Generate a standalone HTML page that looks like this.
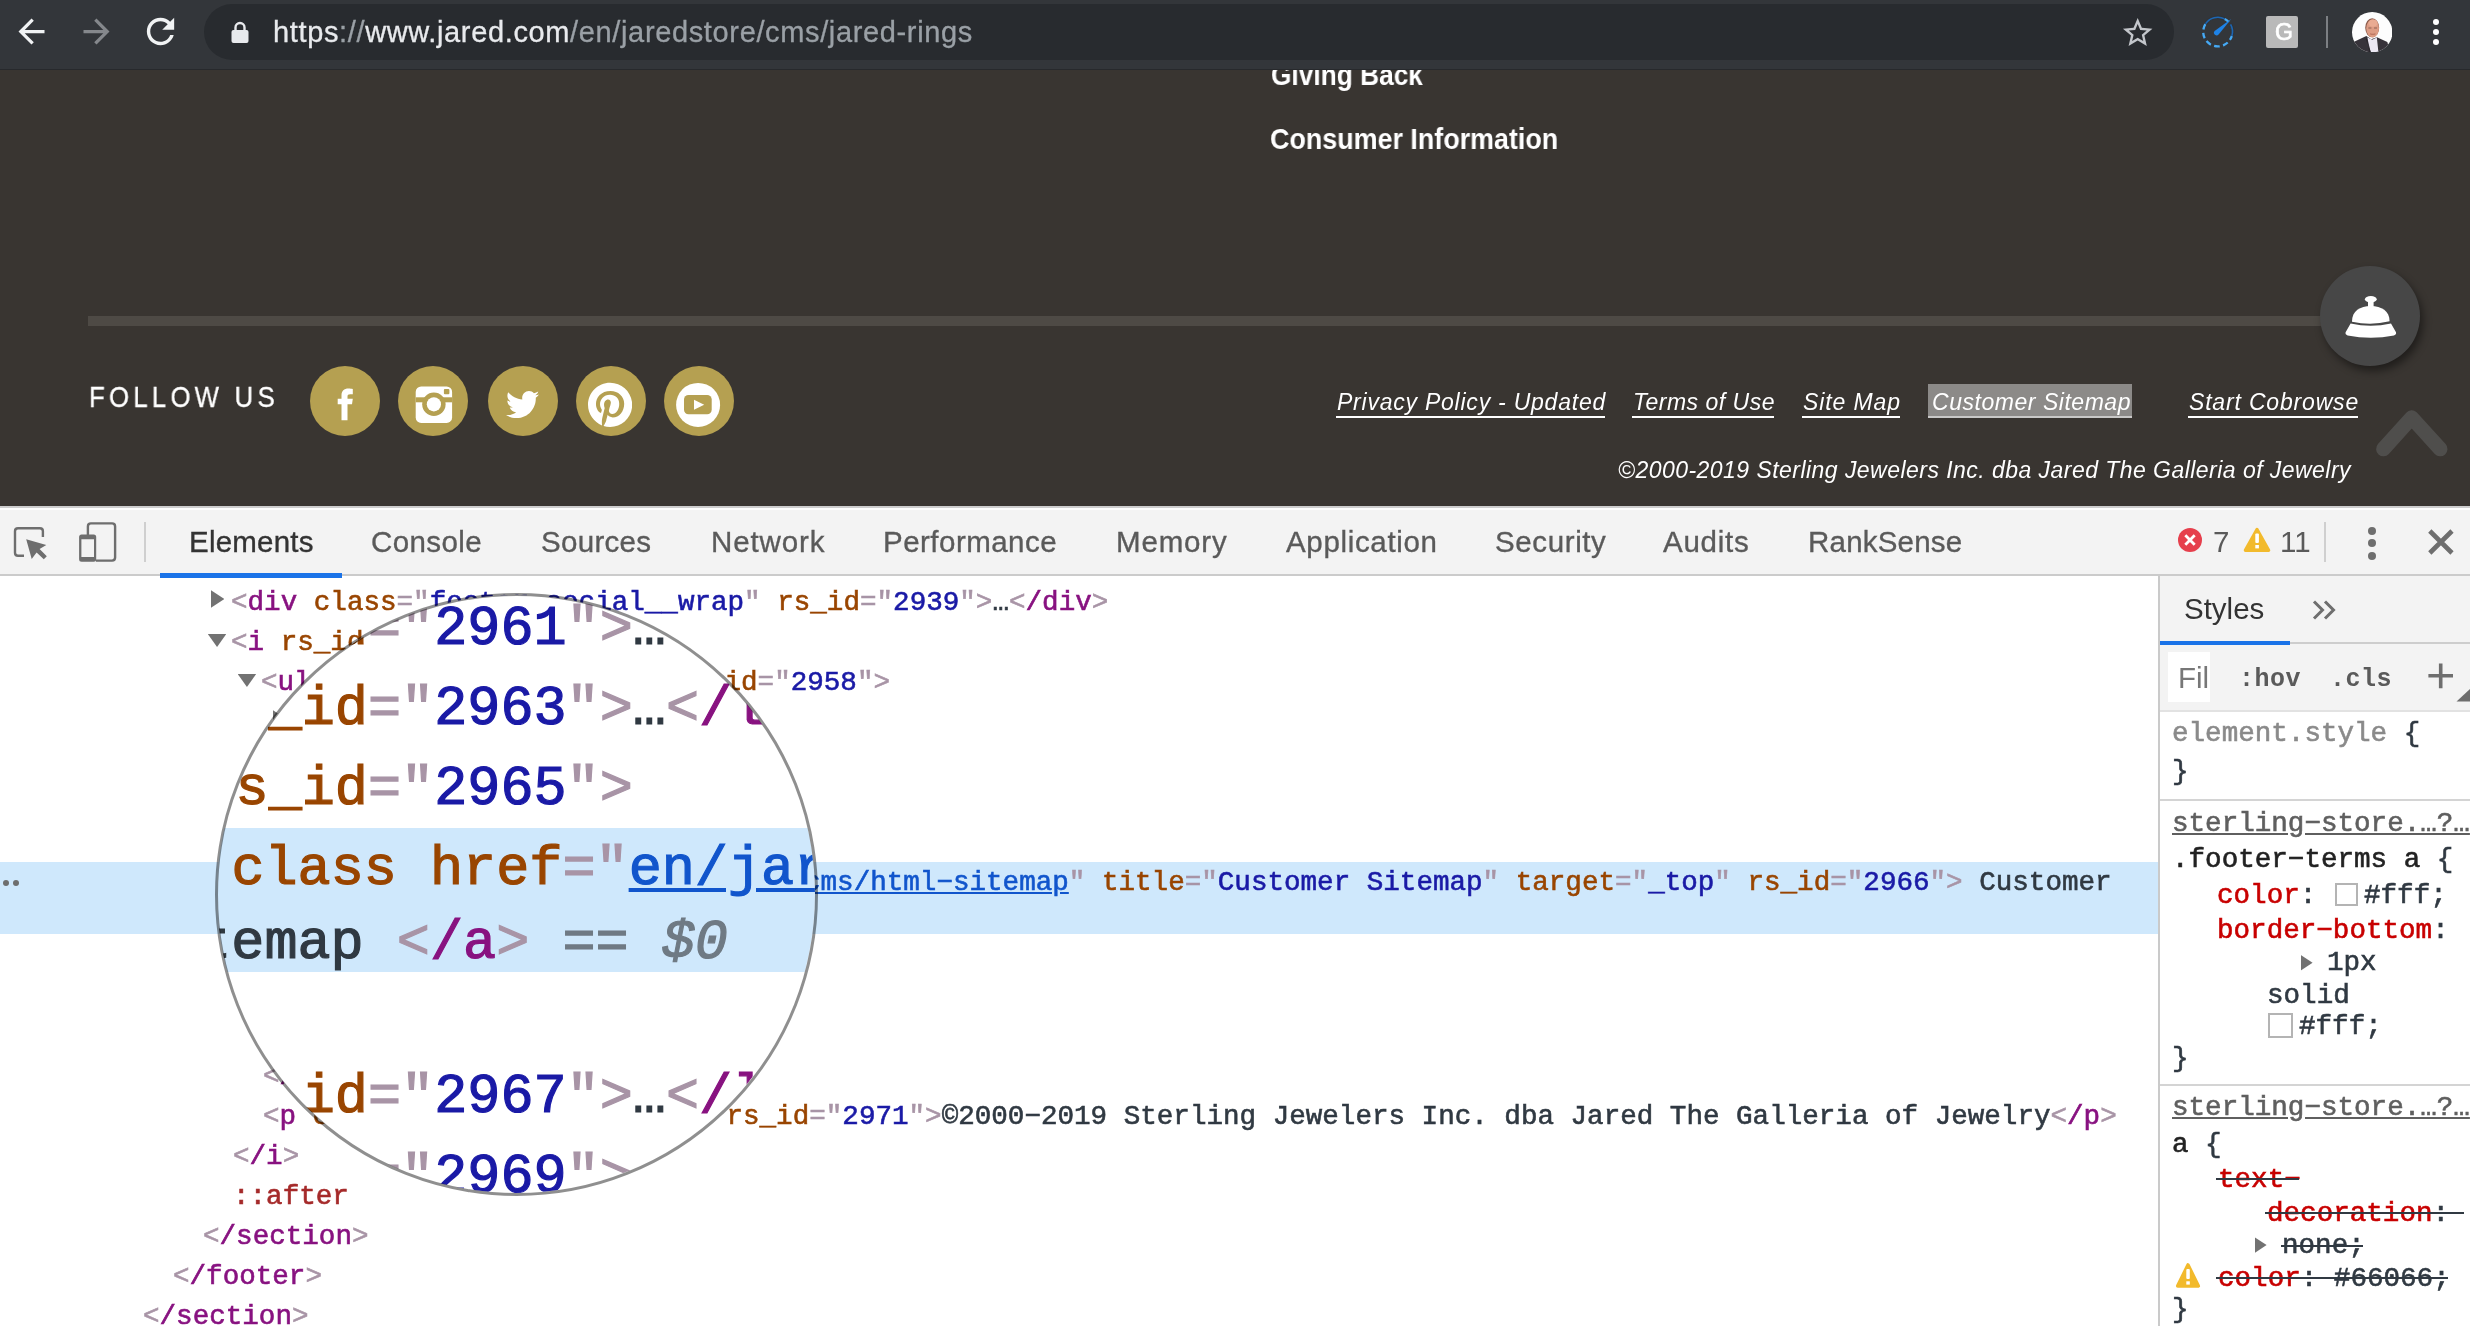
<!DOCTYPE html>
<html><head><meta charset="utf-8"><title>jared</title>
<style>
*{box-sizing:border-box;margin:0;padding:0}
html,body{width:2470px;height:1326px;overflow:hidden;background:#fff}
body{position:relative;font-family:"Liberation Sans",sans-serif}
.abs{position:absolute}
.t,.row,.code{will-change:transform}
.t{position:absolute;white-space:pre;line-height:1}
/* chrome toolbar */
#tb{position:absolute;left:0;top:0;width:2470px;height:69px;background:#33363a}
#tbline{position:absolute;left:0;top:68.5px;width:2470px;height:1.5px;background:#27292c}
#pill{position:absolute;left:204px;top:4px;width:1970px;height:56px;border-radius:28px;background:#282b2f}
#url{left:273px;top:18.2px;font-size:29px;color:#e8eaed;letter-spacing:0.64px;-webkit-text-stroke:0.3px}
#url span{color:#9aa0a6}
/* page */
#page{position:absolute;left:0;top:70px;width:2470px;height:436px;background:#393531;overflow:hidden}
.wt{color:#fff}
.flink{position:absolute;top:315px;height:34px;font-style:italic;font-size:24px;color:#fff;white-space:pre;border-bottom:2px solid #fff;line-height:1}
.flink b{font-weight:normal;display:inline-block;transform-origin:0 0;position:relative;top:9px}
/* devtools */
#dt{position:absolute;left:0;top:506px;width:2470px;height:820px;background:#fff}
#dttb{position:absolute;left:0;top:0;width:2470px;height:70px;background:#f3f3f3;border-top:2px solid #cbcbcb;border-bottom:2px solid #cdcdcd}
.tab{position:absolute;top:16px;font-size:29.5px;color:#5a5a5a;white-space:pre;line-height:34px}
.code{font-family:"Liberation Mono",monospace;font-size:27.58px;white-space:pre;line-height:40px;color:#303942;-webkit-text-stroke:0.6px}
.row{position:absolute;height:40px;white-space:pre}
.tg{color:#a894a6}.tn{color:#881280}.an{color:#994500}.av{color:#1a1aa6}.tx{color:#303942}
.lk{color:#1155cc;text-decoration:underline}
.ps{color:#a52a2a}
.arr{position:absolute;background:#727272}
.arr.r{width:13.4px;height:17.4px;clip-path:polygon(0 0,100% 50%,0 100%)}
.arr.d{width:18.5px;height:13px;clip-path:polygon(0 0,100% 0,50% 100%)}
#ep{position:absolute;left:0;top:577px;width:2158px;height:749px;overflow:hidden;background:#fff}
#mag{position:absolute;left:217px;top:595px;width:598px;height:598px;border-radius:50%;overflow:hidden;background:#fff}
#magin{position:absolute;width:2158px;height:749px;transform-origin:0 0;transform:scale(2);filter:blur(0.3px)}
#magring{position:absolute;left:214.5px;top:592.5px;width:603px;height:603px;border-radius:50%;border:3px solid rgba(0,0,0,.44)}
.pn{color:#c80000}.pv{color:#303942}
.st{text-decoration:line-through;text-decoration-color:#303942}
.sw{display:inline-block;width:22px;height:22px;border:2px solid #b0b0b0;background:#fff;vertical-align:-3px;margin-right:3px}
</style></head>
<body>
<div id="tb"></div><div id="tbline"></div><div id="pill"></div>
<svg class="abs" style="left:11.8px;top:12px;" width="39" height="39" viewBox="0 0 24 24"><path d="M20 11H7.83l5.59-5.59L12 4l-8 8 8 8 1.41-1.41L7.83 13H20v-2z" fill="#f1f3f4"/></svg>
<svg class="abs" style="left:76.5px;top:12px;" width="39" height="39" viewBox="0 0 24 24"><path d="M20 11H7.83l5.59-5.59L12 4l-8 8 8 8 1.41-1.41L7.83 13H20v-2z" fill="#85888c" transform="translate(24,0) scale(-1,1)"/></svg>
<svg class="abs" style="left:140px;top:11px;" width="41" height="41" viewBox="0 0 24 24"><path d="M17.65 6.35C16.2 4.9 14.21 4 12 4c-4.42 0-7.99 3.58-7.99 8s3.57 8 7.99 8c3.73 0 6.84-2.55 7.73-6h-2.08c-.82 2.33-3.04 4-5.65 4-3.31 0-6-2.69-6-6s2.69-6 6-6c1.66 0 3.14.69 4.22 1.78L13 11h7V4l-2.35 2.35z" fill="#f1f3f4"/></svg>
<svg class="abs" style="left:228px;top:18px;" width="24" height="28" viewBox="0 0 24 28"><rect x="3.5" y="12" width="17" height="13" rx="2" fill="#e8eaed"/><path d="M7.5 13 V9.5 a4.5 4.5 0 0 1 9 0 V13" fill="none" stroke="#e8eaed" stroke-width="2.4"/></svg>
<div id="url" class="t">https<span>://</span>www.jared.com<span>/en/jaredstore/cms/jared-rings</span></div>
<svg class="abs" style="left:2120.3px;top:14.7875px;" width="35.4" height="35.4" viewBox="0 0 24 24"><path d="M22 9.24l-7.19-.62L12 2 9.19 8.63 2 9.24l5.46 4.73L5.82 21 12 17.27 18.18 21l-1.63-7.03L22 9.24zM12 15.4l-3.76 2.27 1-4.28-3.32-2.88 4.38-.38L12 6.1l1.71 4.04 4.38.38-3.32 2.88 1 4.28L12 15.4z" fill="#c3c6cb"/></svg>
<svg class="abs" style="left:2198px;top:12px;" width="40" height="40" viewBox="0 0 40 40"><circle cx="19.8" cy="19.8" r="14.6" fill="none" stroke="#45a9f5" stroke-width="2.3" stroke-dasharray="5.6 3.4" transform="rotate(-24 19.8 19.8)"/><path d="M7.6 11.8 A14.6 14.6 0 0 1 26.6 6.9" fill="none" stroke="#2f3337" stroke-width="3.4"/><path d="M7.6 11.8 A14.6 14.6 0 0 1 26.6 6.9" fill="none" stroke="#1d66b3" stroke-width="1.6"/><path d="M32.6 12.4 A14.6 14.6 0 0 1 33.8 24" fill="none" stroke="#2f3337" stroke-width="3.4"/><path d="M32.6 12.4 A14.6 14.6 0 0 1 33.8 24" fill="none" stroke="#1d66b3" stroke-width="1.6"/><path d="M33.2 7 L20.6 22.4 a2.6 2.6 0 0 1 -4 -3.4 Z" fill="#1e82e6"/></svg>
<div class="abs" style="left:2266px;top:16px;width:32px;height:32px;background:#b9b9b9;border-radius:2px"></div>
<div class="t" style="left:2274.6px;top:21.1px;font-size:23px;color:#fff;-webkit-text-stroke:0.7px #fff">G</div>
<div class="abs" style="left:2326px;top:16px;width:2px;height:32px;background:#7c7f83"></div>
<svg class="abs" style="left:2352px;top:12px;" width="40.4" height="40.4" viewBox="0 0 40 40"><defs><clipPath id="avc"><circle cx="20" cy="20" r="20"/></clipPath></defs><circle cx="20" cy="20" r="20" fill="#fdfdfd"/><g clip-path="url(#avc)"><ellipse cx="20" cy="15.6" rx="6.9" ry="9.5" fill="#8a5a4a"/><ellipse cx="20.4" cy="16.2" rx="6.3" ry="9" fill="#dd9c84"/><ellipse cx="20.8" cy="11" rx="4.6" ry="3.6" fill="#e9ab92"/><path d="M16.2 15.8 h3 M21.8 15.8 h3" stroke="#6e4a40" stroke-width="1.1" opacity=".7"/><path d="M18 21.5 q2.6 1.3 5.2 0" stroke="#a8614f" stroke-width="1" fill="none" opacity=".8"/><path d="M1 30 L14.2 23.8 L19 27 L24.7 25 L35 29.8 L38 41 L0 41 Z" fill="#37333a"/><path d="M15 25 L20 27.6 L24.6 25.2 L26.2 40 L18.6 40 Z" fill="#ece8f3"/><path d="M15 25 L13.6 27 L18.8 40 L17 40 Z" fill="#2a272c"/></g></svg>
<div class="abs" style="left:2432.7px;top:18.7px;width:6.6px;height:6.6px;border-radius:50%;background:#fff"></div>
<div class="abs" style="left:2432.7px;top:28.7px;width:6.6px;height:6.6px;border-radius:50%;background:#fff"></div>
<div class="abs" style="left:2432.7px;top:38.7px;width:6.6px;height:6.6px;border-radius:50%;background:#fff"></div>
<div id="page"><div class="t" style="left:1270.5px;top:-9.4px;font-size:28.7px;font-weight:bold;color:#fff;transform:scaleX(.916);transform-origin:0 0">Giving Back</div>
<div class="t" style="left:1270px;top:54.8px;font-size:28.7px;font-weight:bold;color:#fff;transform:scaleX(.937);transform-origin:0 0">Consumer Information</div>
<div class="abs" style="left:88px;top:246px;width:2294px;height:10px;background:#4e4a45"></div>
<div class="t" style="left:89px;top:312.3px;font-size:30px;color:#fff;letter-spacing:4.9px;transform:scaleX(.86);transform-origin:0 0;-webkit-text-stroke:0.3px #fff">FOLLOW US</div>
<div class="abs" style="left:310px;top:295.7px;width:70px;height:70px;border-radius:50%;background:#b5a051"></div>
<div class="abs" style="left:398px;top:295.7px;width:70px;height:70px;border-radius:50%;background:#b5a051"></div>
<div class="abs" style="left:488px;top:295.7px;width:70px;height:70px;border-radius:50%;background:#b5a051"></div>
<div class="abs" style="left:576px;top:295.7px;width:70px;height:70px;border-radius:50%;background:#b5a051"></div>
<div class="abs" style="left:664px;top:295.7px;width:70px;height:70px;border-radius:50%;background:#b5a051"></div>
<svg class="abs" style="left:330px;top:315px" width="30" height="40" viewBox="330 385 30 40"><path d="M341.5 420.2 V404.3 H337.7 V398.8 H341.5 V395.5 C341.5 391 344 388.6 348.5 388.6 C350.3 388.6 351.8 388.8 352.8 389 V394.2 H350.2 C348.2 394.2 347.5 395 347.5 396.6 V398.8 H352.8 L352 404.3 H347.5 V420.2 Z" fill="#fff"/></svg>
<svg class="abs" style="left:410px;top:310px" width="48" height="48" viewBox="410 380 48 48"><rect x="415.7" y="386.4" width="36.4" height="36.5" rx="5.5" fill="#fff"/><rect x="415.7" y="397.3" width="36.4" height="5" fill="#b5a051"/><circle cx="433.9" cy="404.3" r="11.7" fill="#b5a051"/><circle cx="433.9" cy="404.3" r="7.1" fill="#fff"/><rect x="443.9" y="389.1" width="5.5" height="5.1" rx="1" fill="#b5a051"/></svg>
<svg class="abs" style="left:505.5px;top:317.887px" width="33.2" height="33.2" viewBox="0 0 512 512"><path d="M459.37 151.716c.325 4.548.325 9.097.325 13.645 0 138.72-105.583 298.558-298.558 298.558-59.452 0-114.68-17.219-161.137-47.106 8.447.974 16.568 1.299 25.34 1.299 49.055 0 94.213-16.568 130.274-44.832-46.132-.975-84.792-31.188-98.112-72.772 6.498.974 12.995 1.624 19.818 1.624 9.421 0 18.843-1.3 27.614-3.573-48.081-9.747-84.143-51.98-84.143-102.985v-1.299c13.969 7.797 30.214 12.67 47.431 13.319-28.264-18.843-46.781-51.005-46.781-87.391 0-19.492 5.197-37.36 14.294-52.954 51.655 63.675 129.3 105.258 216.365 109.807-1.624-7.797-2.599-15.918-2.599-24.04 0-57.828 46.782-104.934 104.934-104.934 30.213 0 57.502 12.67 76.67 33.137 23.715-4.548 46.456-13.32 66.599-25.34-7.798 24.366-24.366 44.833-46.132 57.827 21.117-2.273 41.584-8.122 60.426-16.243-14.292 20.791-32.161 39.308-52.628 54.253z" fill="#fff"/></svg>
<svg class="abs" style="left:587.9px;top:312.087px" width="44.2" height="45.6258" viewBox="0 0 496 512"><path d="M496 256c0 137-111 248-248 248-25.6 0-50.2-3.9-73.4-11.1 10.1-16.5 25.2-43.5 30.8-65 3-11.6 15.4-59 15.4-59 8.1 15.4 31.7 28.5 56.8 28.5 74.8 0 128.7-68.8 128.7-154.3 0-81.9-66.9-143.2-152.9-143.2-107 0-163.9 71.8-163.9 150.1 0 36.4 19.4 81.7 50.3 96.1 4.7 2.2 7.2 1.2 8.3-3.3.8-3.4 5-20.3 6.9-28.1.6-2.5.3-4.7-1.7-7.1-10.1-12.5-18.3-35.3-18.3-56.6 0-54.7 41.4-107.6 112-107.6 60.9 0 103.6 41.5 103.6 100.9 0 67.1-33.9 113.6-78 113.6-24.3 0-42.6-20.1-36.7-44.8 7-29.5 20.5-61.3 20.5-82.6 0-19-10.2-34.9-31.4-34.9-24.9 0-44.9 25.7-44.9 60.2 0 22 7.4 36.8 7.4 36.8s-24.5 103.8-29 123.2c-5 21.4-3 51.6-.9 71.2C65.4 450.9 0 361.1 0 256 0 119 111 8 248 8s248 111 248 248z" fill="#fff"/></svg>
<svg class="abs" style="left:670px;top:306px" width="56" height="56" viewBox="670 376 56 56"><circle cx="698.1" cy="404.9" r="22" fill="#fff"/><rect x="684" y="395" width="27.7" height="19.3" rx="4.5" fill="#b5a051"/><path d="M694 399.7 L704.2 404.7 L694 409.7 Z" fill="#fff"/></svg>
<div class="abs" style="left:1336px;top:346px;width:269px;height:2px;background:#fff"></div><div class="t" style="left:1337px;top:320.5px;font-size:23px;font-style:italic;color:#fff;letter-spacing:0.769px">Privacy Policy - Updated</div>
<div class="abs" style="left:1632px;top:346px;width:142px;height:2px;background:#fff"></div><div class="t" style="left:1633px;top:320.5px;font-size:23px;font-style:italic;color:#fff;letter-spacing:0.507px">Terms of Use</div>
<div class="abs" style="left:1802px;top:346px;width:98px;height:2px;background:#fff"></div><div class="t" style="left:1803px;top:320.5px;font-size:23px;font-style:italic;color:#fff;letter-spacing:0.904px">Site Map</div>
<div class="abs" style="left:1928px;top:314px;width:204px;height:34px;background:#8c8a88"></div><div class="abs" style="left:1928px;top:346px;width:204px;height:2px;background:#c9c8c7"></div><div class="t" style="left:1932px;top:320.5px;font-size:23px;font-style:italic;color:#fff;letter-spacing:0.533px">Customer Sitemap</div>
<div class="abs" style="left:2188px;top:346px;width:170px;height:2px;background:#fff"></div><div class="t" style="left:2189px;top:320.5px;font-size:23px;font-style:italic;color:#fff;letter-spacing:0.820px">Start Cobrowse</div>
<div class="t" style="left:1618px;top:388.5px;font-size:23px;font-style:italic;color:#fff;letter-spacing:0.460px">©2000-2019 Sterling Jewelers Inc. dba Jared The Galleria of Jewelry</div>
<div class="abs" style="left:2320px;top:196px;width:100px;height:100px;border-radius:50%;background:#474747;box-shadow:3px 5px 9px rgba(0,0,0,.45)"></div>
<svg class="abs" style="left:2340px;top:222px" width="60" height="50" viewBox="2340 292 60 50"><ellipse cx="2370.8" cy="299.2" rx="5.9" ry="3.1" fill="#fff"/><rect x="2368" y="299" width="5.6" height="8" fill="#fff"/><path d="M2352 321.3 C2352 311 2360 306 2370.8 306 C2381.6 306 2389.6 311 2389.6 321.3 Q2370.8 326 2352 321.7 Z" fill="#fff"/><path d="M2350.6 323.6 Q2370.8 328 2391 323.6 L2396 332.3 Q2396.6 334.6 2394 335.4 Q2370.8 340 2347.6 335.4 Q2345 334.6 2345.6 332.3 Z" fill="#fff"/></svg>
<svg class="abs" style="left:2370px;top:330px" width="90" height="60" viewBox="2370 400 90 60"><path d="M2383.4 449 L2411.7 417.6 L2440.2 449" fill="none" stroke="#4f4e4c" stroke-width="14.6" stroke-linecap="round" stroke-linejoin="round"/></svg></div>
<div id="dt"></div>
<div class="abs" style="left:0;top:506px;width:2470px;height:70px;background:#f3f3f3;border-top:2px solid #cdcdcd;border-bottom:2px solid #cbcbcb"></div><div class="abs" style="left:0;top:508px;width:2470px;height:2px;background:#fdfdfd"></div>
<svg class="abs" style="left:10px;top:520px" width="44" height="44" viewBox="10 520 44 44"><path d="M24 555.8 H18 Q15 555.8 15 552.8 V531.2 Q15 528.2 18 528.2 H39.9 Q42.9 528.2 42.9 531.2 V537" fill="none" stroke="#6e6e6e" stroke-width="2.4"/><path d="M26.2 539.2 L46.3 545 L39.6 549 L46.8 556.2 L43.8 559.3 L36.6 552.4 L31.7 558.9 Z" fill="#6e6e6e"/></svg>
<svg class="abs" style="left:74px;top:518px" width="48" height="48" viewBox="74 518 48 48"><path d="M87.9 535 V526.4 Q87.9 523.4 90.9 523.4 H112.1 Q115.1 523.4 115.1 526.4 V557.6 Q115.1 560.6 112.1 560.6 H96" fill="none" stroke="#6e6e6e" stroke-width="2.4"/><path d="M81.6 534.6 H93.7 Q96.2 534.6 96.2 537.1 V559.3 Q96.2 561.8 93.7 561.8 H81.6 Q79.1 561.8 79.1 559.3 V537.1 Q79.1 534.6 81.6 534.6 Z M81.4 539.2 V557 H94 V539.2 Z" fill="#6e6e6e" fill-rule="evenodd"/></svg>
<div class="abs" style="left:144px;top:522px;width:2px;height:40px;background:#cfcfcf"></div>
<div class="t" style="left:188.9px;top:526.7px;font-size:29.5px;color:#333;letter-spacing:0.202px;-webkit-text-stroke:0.35px">Elements</div>
<div class="t" style="left:371.2px;top:526.7px;font-size:29.5px;color:#5a5a5a;letter-spacing:0.410px;-webkit-text-stroke:0.35px">Console</div>
<div class="t" style="left:541.2px;top:526.7px;font-size:29.5px;color:#5a5a5a;letter-spacing:0.296px;-webkit-text-stroke:0.35px">Sources</div>
<div class="t" style="left:710.5px;top:526.7px;font-size:29.5px;color:#5a5a5a;letter-spacing:0.871px;-webkit-text-stroke:0.35px">Network</div>
<div class="t" style="left:883.2px;top:526.7px;font-size:29.5px;color:#5a5a5a;letter-spacing:0.474px;-webkit-text-stroke:0.35px">Performance</div>
<div class="t" style="left:1115.7px;top:526.7px;font-size:29.5px;color:#5a5a5a;letter-spacing:0.842px;-webkit-text-stroke:0.35px">Memory</div>
<div class="t" style="left:1286.2px;top:526.7px;font-size:29.5px;color:#5a5a5a;letter-spacing:0.661px;-webkit-text-stroke:0.35px">Application</div>
<div class="t" style="left:1495.2px;top:526.7px;font-size:29.5px;color:#5a5a5a;letter-spacing:0.615px;-webkit-text-stroke:0.35px">Security</div>
<div class="t" style="left:1663px;top:526.7px;font-size:29.5px;color:#5a5a5a;letter-spacing:0.750px;-webkit-text-stroke:0.35px">Audits</div>
<div class="t" style="left:1807.8px;top:526.7px;font-size:29.5px;color:#5a5a5a;letter-spacing:0.209px;-webkit-text-stroke:0.35px">RankSense</div>
<div class="abs" style="left:160px;top:572.8px;width:182px;height:4.8px;background:#1a73e8;z-index:5"></div>
<svg class="abs" style="left:2176px;top:526px" width="28" height="28" viewBox="2176 526 28 28"><circle cx="2190" cy="540" r="12" fill="#e63f4c"/><path d="M2185.3 535.3 L2194.7 544.7 M2194.7 535.3 L2185.3 544.7" stroke="#fff" stroke-width="2.8"/></svg>
<div class="t" style="left:2213px;top:526.9px;font-size:29.5px;color:#5a5a5a">7</div>
<svg class="abs" style="left:2240px;top:524px" width="34" height="32" viewBox="2240 524 34 32"><path d="M2257 529.5 L2268.6 550.3 H2245.4 Z" fill="#f2ba2c" stroke="#f2ba2c" stroke-width="3.4" stroke-linejoin="round"/><rect x="2255.3" y="533.5" width="3.6" height="9.5" rx="1" fill="#fff"/><rect x="2255.3" y="545" width="3.6" height="3.4" fill="#fff"/></svg>
<div class="t" style="left:2280px;top:526.9px;font-size:29.5px;color:#5a5a5a">11</div>
<div class="abs" style="left:2324px;top:522px;width:2px;height:40px;background:#cfcfcf"></div>
<div class="abs" style="left:2368px;top:526.7px;width:8px;height:8px;border-radius:50%;background:#6e6e6e"></div>
<div class="abs" style="left:2368px;top:539.3px;width:8px;height:8px;border-radius:50%;background:#6e6e6e"></div>
<div class="abs" style="left:2368px;top:551.9px;width:8px;height:8px;border-radius:50%;background:#6e6e6e"></div>
<svg class="abs" style="left:2424px;top:526px" width="34" height="32" viewBox="2424 526 34 32"><path d="M2429.8 531 L2452 553 M2452 531 L2429.8 553" stroke="#6e6e6e" stroke-width="4.6"/></svg>
<div id="ep"><div class="abs" style="left:0;top:285px;width:2158px;height:72px;background:#cfe8fc"></div>
<div class="abs" style="left:3px;top:303px;width:6px;height:6px;border-radius:50%;background:#6e6e6e"></div><div class="abs" style="left:13px;top:303px;width:6px;height:6px;border-radius:50%;background:#6e6e6e"></div>
<div class="row code" style="left:230.6px;top:6px"><span class="tg">&lt;</span><span class="tn">div</span> <span class="an">class</span><span class="tg">=&quot;</span><span class="av">footer−social__wrap</span><span class="tg">&quot;</span> <span class="an">rs_id</span><span class="tg">=&quot;</span><span class="av">2939</span><span class="tg">&quot;</span><span class="tg">&gt;</span><span class="tx">…</span><span class="tg">&lt;</span><span class="tn">/div</span><span class="tg">&gt;</span></div>
<div class="arr r" style="left:211px;top:13.3px"></div>
<div class="row code" style="left:230.6px;top:46px"><span class="tg">&lt;</span><span class="tn">i</span> <span class="an">rs_id</span><span class="tg">=&quot;</span><span class="av">2957</span><span class="tg">&quot;</span><span class="tg">&gt;</span></div>
<div class="arr d" style="left:207.8px;top:57px"></div>
<div class="row code" style="left:260.7px;top:86px"><span class="tg">&lt;</span><span class="tn">ul</span> <span class="an">class</span><span class="tg">=&quot;</span><span class="av">footer−terms</span><span class="tg">&quot;</span> <span class="an">rs_id</span><span class="tg">=&quot;</span><span class="av">2958</span><span class="tg">&quot;</span><span class="tg">&gt;</span></div>
<div class="arr d" style="left:237.7px;top:97px"></div>
<div class="row code" style="left:292.5px;top:126px"><span class="tg">&lt;</span><span class="tn">li</span> <span class="an">rs_id</span><span class="tg">=&quot;</span><span class="av">2959</span><span class="tg">&quot;</span><span class="tg">&gt;</span><span class="tx">…</span><span class="tg">&lt;</span><span class="tn">/li</span><span class="tg">&gt;</span></div>
<div class="arr r" style="left:273px;top:133.3px"></div>
<div class="row code" style="left:292.5px;top:166px"><span class="tg">&lt;</span><span class="tn">li</span> <span class="an">rs_id</span><span class="tg">=&quot;</span><span class="av">2961</span><span class="tg">&quot;</span><span class="tg">&gt;</span><span class="tx">…</span><span class="tg">&lt;</span><span class="tn">/li</span><span class="tg">&gt;</span></div>
<div class="arr r" style="left:273px;top:173.3px"></div>
<div class="row code" style="left:292.5px;top:206px"><span class="tg">&lt;</span><span class="tn">li</span> <span class="an">rs_id</span><span class="tg">=&quot;</span><span class="av">2963</span><span class="tg">&quot;</span><span class="tg">&gt;</span><span class="tx">…</span><span class="tg">&lt;</span><span class="tn">/li</span><span class="tg">&gt;</span></div>
<div class="arr r" style="left:273px;top:213.3px"></div>
<div class="row code" style="left:292.5px;top:246px"><span class="tg">&lt;</span><span class="tn">li</span> <span class="an">rs_id</span><span class="tg">=&quot;</span><span class="av">2965</span><span class="tg">&quot;</span><span class="tg">&gt;</span></div>
<div class="arr d" style="left:268px;top:257px"></div>
<div class="row code" style="left:323.5px;top:286px"><span class="tg">&lt;</span><span class="tn">a</span> <span class="an">class</span> <span class="an">href</span><span class="tg">=&quot;</span><span class="lk">en/jaredstore/cms/html−sitemap</span><span class="tg">&quot;</span> <span class="an">title</span><span class="tg">=&quot;</span><span class="av">Customer Sitemap</span><span class="tg">&quot;</span> <span class="an">target</span><span class="tg">=&quot;</span><span class="av">_top</span><span class="tg">&quot;</span> <span class="an">rs_id</span><span class="tg">=&quot;</span><span class="av">2966</span><span class="tg">&quot;</span><span class="tg">&gt;</span><span class="tx"> Customer</span></div>
<div class="row code" style="left:323.5px;top:323px"><span class="tx">Sitemap </span><span class="tg">&lt;</span><span class="tn">/a</span><span class="tg">&gt;</span><span style="color:#6f7a84"> == <i>$0</i></span></div>
<div class="row code" style="left:292.5px;top:360px"><span class="tg">&lt;</span><span class="tn">/li</span><span class="tg">&gt;</span></div>
<div class="row code" style="left:292.5px;top:400px"><span class="tg">&lt;</span><span class="tn">li</span> <span class="an">rs_id</span><span class="tg">=&quot;</span><span class="av">2967</span><span class="tg">&quot;</span><span class="tg">&gt;</span><span class="tx">…</span><span class="tg">&lt;</span><span class="tn">/li</span><span class="tg">&gt;</span></div>
<div class="arr r" style="left:273px;top:407.3px"></div>
<div class="row code" style="left:292.5px;top:440px"><span class="tg">&lt;</span><span class="tn">li</span> <span class="an">rs_id</span><span class="tg">=&quot;</span><span class="av">2969</span><span class="tg">&quot;</span><span class="tg">&gt;</span><span class="tx">…</span><span class="tg">&lt;</span><span class="tn">/li</span><span class="tg">&gt;</span></div>
<div class="arr r" style="left:273px;top:447.3px"></div>
<div class="row code" style="left:262.5px;top:480px"><span class="tg">&lt;</span><span class="tn">/ul</span><span class="tg">&gt;</span></div>
<div class="row code" style="left:262.5px;top:520px"><span class="tg">&lt;</span><span class="tn">p</span> <span class="an">class</span><span class="tg">=&quot;</span><span class="av">footer−copyright</span><span class="tg">&quot;</span> <span class="an">rs_id</span><span class="tg">=&quot;</span><span class="av">2971</span><span class="tg">&quot;</span><span class="tg">&gt;</span><span class="tx">©2000−2019 Sterling Jewelers Inc. dba Jared The Galleria of Jewelry</span><span class="tg">&lt;</span><span class="tn">/p</span><span class="tg">&gt;</span></div>
<div class="row code" style="left:232.5px;top:560px"><span class="tg">&lt;</span><span class="tn">/i</span><span class="tg">&gt;</span></div>
<div class="row code" style="left:232.5px;top:600px"><span class="ps">::after</span></div>
<div class="row code" style="left:202.5px;top:640px"><span class="tg">&lt;</span><span class="tn">/section</span><span class="tg">&gt;</span></div>
<div class="row code" style="left:172.5px;top:680px"><span class="tg">&lt;</span><span class="tn">/footer</span><span class="tg">&gt;</span></div>
<div class="row code" style="left:142.5px;top:720px"><span class="tg">&lt;</span><span class="tn">/section</span><span class="tg">&gt;</span></div></div>
<div id="mag"><div id="magin" style="left:-733px;top:-337.5px"><div class="abs" style="left:0;top:285px;width:2158px;height:72px;background:#cfe8fc"></div>
<div class="abs" style="left:3px;top:303px;width:6px;height:6px;border-radius:50%;background:#6e6e6e"></div><div class="abs" style="left:13px;top:303px;width:6px;height:6px;border-radius:50%;background:#6e6e6e"></div>
<div class="row code" style="left:230.6px;top:6px"><span class="tg">&lt;</span><span class="tn">div</span> <span class="an">class</span><span class="tg">=&quot;</span><span class="av">footer−social__wrap</span><span class="tg">&quot;</span> <span class="an">rs_id</span><span class="tg">=&quot;</span><span class="av">2939</span><span class="tg">&quot;</span><span class="tg">&gt;</span><span class="tx">…</span><span class="tg">&lt;</span><span class="tn">/div</span><span class="tg">&gt;</span></div>
<div class="arr r" style="left:211px;top:13.3px"></div>
<div class="row code" style="left:230.6px;top:46px"><span class="tg">&lt;</span><span class="tn">i</span> <span class="an">rs_id</span><span class="tg">=&quot;</span><span class="av">2957</span><span class="tg">&quot;</span><span class="tg">&gt;</span></div>
<div class="arr d" style="left:207.8px;top:57px"></div>
<div class="row code" style="left:260.7px;top:86px"><span class="tg">&lt;</span><span class="tn">ul</span> <span class="an">class</span><span class="tg">=&quot;</span><span class="av">footer−terms</span><span class="tg">&quot;</span> <span class="an">rs_id</span><span class="tg">=&quot;</span><span class="av">2958</span><span class="tg">&quot;</span><span class="tg">&gt;</span></div>
<div class="arr d" style="left:237.7px;top:97px"></div>
<div class="row code" style="left:292.5px;top:126px"><span class="tg">&lt;</span><span class="tn">li</span> <span class="an">rs_id</span><span class="tg">=&quot;</span><span class="av">2959</span><span class="tg">&quot;</span><span class="tg">&gt;</span><span class="tx">…</span><span class="tg">&lt;</span><span class="tn">/li</span><span class="tg">&gt;</span></div>
<div class="arr r" style="left:273px;top:133.3px"></div>
<div class="row code" style="left:292.5px;top:166px"><span class="tg">&lt;</span><span class="tn">li</span> <span class="an">rs_id</span><span class="tg">=&quot;</span><span class="av">2961</span><span class="tg">&quot;</span><span class="tg">&gt;</span><span class="tx">…</span><span class="tg">&lt;</span><span class="tn">/li</span><span class="tg">&gt;</span></div>
<div class="arr r" style="left:273px;top:173.3px"></div>
<div class="row code" style="left:292.5px;top:206px"><span class="tg">&lt;</span><span class="tn">li</span> <span class="an">rs_id</span><span class="tg">=&quot;</span><span class="av">2963</span><span class="tg">&quot;</span><span class="tg">&gt;</span><span class="tx">…</span><span class="tg">&lt;</span><span class="tn">/li</span><span class="tg">&gt;</span></div>
<div class="arr r" style="left:273px;top:213.3px"></div>
<div class="row code" style="left:292.5px;top:246px"><span class="tg">&lt;</span><span class="tn">li</span> <span class="an">rs_id</span><span class="tg">=&quot;</span><span class="av">2965</span><span class="tg">&quot;</span><span class="tg">&gt;</span></div>
<div class="arr d" style="left:268px;top:257px"></div>
<div class="row code" style="left:323.5px;top:286px"><span class="tg">&lt;</span><span class="tn">a</span> <span class="an">class</span> <span class="an">href</span><span class="tg">=&quot;</span><span class="lk">en/jaredstore/cms/html−sitemap</span><span class="tg">&quot;</span> <span class="an">title</span><span class="tg">=&quot;</span><span class="av">Customer Sitemap</span><span class="tg">&quot;</span> <span class="an">target</span><span class="tg">=&quot;</span><span class="av">_top</span><span class="tg">&quot;</span> <span class="an">rs_id</span><span class="tg">=&quot;</span><span class="av">2966</span><span class="tg">&quot;</span><span class="tg">&gt;</span><span class="tx"> Customer</span></div>
<div class="row code" style="left:323.5px;top:323px"><span class="tx">Sitemap </span><span class="tg">&lt;</span><span class="tn">/a</span><span class="tg">&gt;</span><span style="color:#6f7a84"> == <i>$0</i></span></div>
<div class="row code" style="left:292.5px;top:360px"><span class="tg">&lt;</span><span class="tn">/li</span><span class="tg">&gt;</span></div>
<div class="row code" style="left:292.5px;top:400px"><span class="tg">&lt;</span><span class="tn">li</span> <span class="an">rs_id</span><span class="tg">=&quot;</span><span class="av">2967</span><span class="tg">&quot;</span><span class="tg">&gt;</span><span class="tx">…</span><span class="tg">&lt;</span><span class="tn">/li</span><span class="tg">&gt;</span></div>
<div class="arr r" style="left:273px;top:407.3px"></div>
<div class="row code" style="left:292.5px;top:440px"><span class="tg">&lt;</span><span class="tn">li</span> <span class="an">rs_id</span><span class="tg">=&quot;</span><span class="av">2969</span><span class="tg">&quot;</span><span class="tg">&gt;</span><span class="tx">…</span><span class="tg">&lt;</span><span class="tn">/li</span><span class="tg">&gt;</span></div>
<div class="arr r" style="left:273px;top:447.3px"></div>
<div class="row code" style="left:262.5px;top:480px"><span class="tg">&lt;</span><span class="tn">/ul</span><span class="tg">&gt;</span></div>
<div class="row code" style="left:262.5px;top:520px"><span class="tg">&lt;</span><span class="tn">p</span> <span class="an">class</span><span class="tg">=&quot;</span><span class="av">footer−copyright</span><span class="tg">&quot;</span> <span class="an">rs_id</span><span class="tg">=&quot;</span><span class="av">2971</span><span class="tg">&quot;</span><span class="tg">&gt;</span><span class="tx">©2000−2019 Sterling Jewelers Inc. dba Jared The Galleria of Jewelry</span><span class="tg">&lt;</span><span class="tn">/p</span><span class="tg">&gt;</span></div>
<div class="row code" style="left:232.5px;top:560px"><span class="tg">&lt;</span><span class="tn">/i</span><span class="tg">&gt;</span></div>
<div class="row code" style="left:232.5px;top:600px"><span class="ps">::after</span></div>
<div class="row code" style="left:202.5px;top:640px"><span class="tg">&lt;</span><span class="tn">/section</span><span class="tg">&gt;</span></div>
<div class="row code" style="left:172.5px;top:680px"><span class="tg">&lt;</span><span class="tn">/footer</span><span class="tg">&gt;</span></div>
<div class="row code" style="left:142.5px;top:720px"><span class="tg">&lt;</span><span class="tn">/section</span><span class="tg">&gt;</span></div></div></div><div id="magring"></div>
<div class="abs" style="left:2158px;top:576px;width:2px;height:750px;background:#cacaca"></div>
<div class="abs" style="left:2160px;top:576px;width:310px;height:136px;background:#f3f3f3"></div>
<div class="abs" style="left:2160px;top:642px;width:310px;height:2px;background:#cdcdcd"></div>
<div class="abs" style="left:2160px;top:641px;width:130px;height:3.5px;background:#1a73e8"></div>
<div class="abs" style="left:2160px;top:710px;width:310px;height:2px;background:#e2e2e2"></div>
<div class="t" style="left:2183.5px;top:594.4px;font-size:29.5px;color:#333">Styles</div>
<svg class="abs" style="left:2308px;top:596px" width="32" height="28" viewBox="2308 596 32 28"><path d="M2314 601.5 L2322.5 610 L2314 618.5 M2325 601.5 L2333.5 610 L2325 618.5" fill="none" stroke="#6e6e6e" stroke-width="3"/></svg>
<div class="abs" style="left:2168px;top:652px;width:42px;height:50px;background:#fff"></div>
<div class="t" style="left:2178px;top:662.9px;font-size:29.5px;color:#777">Fil</div>
<div class="t" style="left:2238.5px;top:666.5px;font-family:'Liberation Mono',monospace;font-weight:bold;font-size:25px;color:#5a5a5a;letter-spacing:0.5px">:hov</div>
<div class="t" style="left:2329.5px;top:666.5px;font-family:'Liberation Mono',monospace;font-weight:bold;font-size:25px;color:#5a5a5a;letter-spacing:0.5px">.cls</div>
<svg class="abs" style="left:2424px;top:660px" width="34" height="32" viewBox="2424 660 34 32"><path d="M2428.4 675.8 H2453 M2440.7 663.4 V688.2" stroke="#6e6e6e" stroke-width="3.6"/></svg>
<svg class="abs" style="left:2454px;top:686px" width="16" height="18" viewBox="2454 686 16 18"><path d="M2470 689 V701.5 H2456.5 Z" fill="#6e6e6e"/></svg>
<div class="t code" style="left:2171.5px;top:720.16px;line-height:1;"><span style="color:#8a8a8a">element.style</span> {</div>
<div class="t code" style="left:2171.5px;top:757.86px;line-height:1;">}</div>
<div class="abs" style="left:2160px;top:799px;width:310px;height:2px;background:#d4d4d4"></div>
<div class="t code" style="left:2171.5px;top:810.16px;line-height:1;"><span style="color:#5f5f5f;text-decoration:underline">sterling−store.…?…</span></div>
<div class="t code" style="left:2171.5px;top:846.26px;line-height:1;"><span style="color:#222">.footer−terms a</span> {</div>
<div class="t code" style="left:2217.3px;top:881.86px;line-height:1;"><span class="pn">color</span>: </div>
<div class="abs" style="left:2334.5px;top:882.5px;width:23.5px;height:23px;border:2px solid #b4b4b4;background:#fff"></div>
<div class="t code" style="left:2363.5px;top:881.86px;line-height:1;">#fff;</div>
<div class="t code" style="left:2217.3px;top:916.86px;line-height:1;"><span class="pn">border−bottom</span>:</div>
<div class="arr r" style="left:2300.8px;top:955px;width:11.8px;height:15.6px"></div>
<div class="t code" style="left:2327px;top:949.46px;line-height:1;">1px</div>
<div class="t code" style="left:2266.5px;top:982.36px;line-height:1;">solid</div>
<div class="abs" style="left:2268px;top:1013px;width:25px;height:24.5px;border:2px solid #b4b4b4;background:#fff"></div>
<div class="t code" style="left:2298.5px;top:1013.46px;line-height:1;">#fff;</div>
<div class="t code" style="left:2171.5px;top:1044.66px;line-height:1;">}</div>
<div class="abs" style="left:2160px;top:1084px;width:310px;height:2px;background:#d4d4d4"></div>
<div class="t code" style="left:2171.5px;top:1094.46px;line-height:1;"><span style="color:#5f5f5f;text-decoration:underline">sterling−store.…?…</span></div>
<div class="t code" style="left:2171.5px;top:1130.86px;line-height:1;"><span style="color:#222">a</span> {</div>
<div class="t code" style="left:2217.6px;top:1166.36px;line-height:1;"><span class="pn">text−</span></div>
<div class="abs" style="left:2215.5px;top:1178.3px;width:83px;height:2px;background:#303942"></div>
<div class="t code" style="left:2266.5px;top:1199.86px;line-height:1;"><span class="pn">decoration</span>: </div>
<div class="abs" style="left:2265px;top:1211.5px;width:199px;height:2px;background:#303942"></div>
<div class="arr r" style="left:2254.8px;top:1237.3px;width:11.8px;height:15.6px"></div>
<div class="t code" style="left:2281.6px;top:1231.86px;line-height:1;">none;</div>
<div class="abs" style="left:2281px;top:1244.5px;width:82px;height:2px;background:#303942"></div>
<svg class="abs" style="left:2172px;top:1258px" width="32" height="34" viewBox="2172 1258 32 34"><path d="M2188 1265 L2198.3 1286 H2177.7 Z" fill="#f2ba2c" stroke="#f2ba2c" stroke-width="3.6" stroke-linejoin="round"/><rect x="2186.3" y="1269" width="3.5" height="10" rx="1" fill="#fff"/><rect x="2186.3" y="1281.3" width="3.5" height="3.3" fill="#fff"/></svg>
<div class="t code" style="left:2217.6px;top:1264.86px;line-height:1;"><span class="pn">color</span>: #66066;</div>
<div class="abs" style="left:2215.5px;top:1276.5px;width:232px;height:2px;background:#303942"></div>
<div class="t code" style="left:2171.5px;top:1295.86px;line-height:1;">}</div>
</body></html>
